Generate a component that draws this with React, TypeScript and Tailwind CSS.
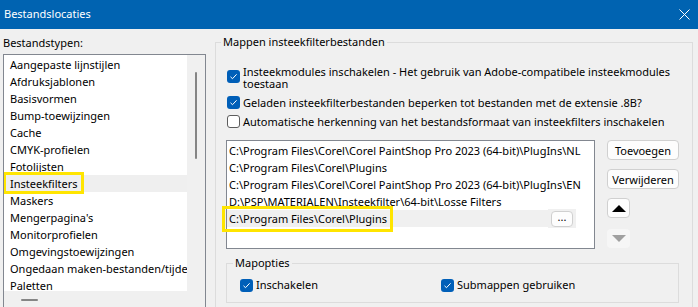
import React from "react";

const fileTypes = [
  "Aangepaste lijnstijlen",
  "Afdruksjablonen",
  "Basisvormen",
  "Bump-toewijzingen",
  "Cache",
  "CMYK-profielen",
  "Fotolijsten",
  "Insteekfilters",
  "Maskers",
  "Mengerpagina's",
  "Monitorprofielen",
  "Omgevingstoewijzingen",
  "Ongedaan maken-bestanden/tijdelijke bestanden",
  "Paletten",
];

const folders = [
  "C:\\Program Files\\Corel\\Corel PaintShop Pro 2023 (64-bit)\\PlugIns\\NL",
  "C:\\Program Files\\Corel\\Plugins",
  "C:\\Program Files\\Corel\\Corel PaintShop Pro 2023 (64-bit)\\PlugIns\\EN",
  "D:\\PSP\\MATERIALEN\\Insteekfilter\\64-bit\\Losse Filters",
];

function CheckBox({ checked }: { checked: boolean }) {
  if (!checked) {
    return (
      <span className="block h-[13px] w-[13px] shrink-0 rounded-[3px] border border-[#5d5d5d] bg-white" />
    );
  }
  return (
    <span className="flex h-[13px] w-[13px] shrink-0 items-center justify-center rounded-[3px] bg-[#005fb8]">
      <svg width="9" height="9" viewBox="0 0 9 9" fill="none">
        <path d="M1.5 4.8 3.5 6.7 7.6 2.3" stroke="white" strokeWidth="1" />
      </svg>
    </span>
  );
}

function Button({ children, className = "" }: { children: React.ReactNode; className?: string }) {
  return (
    <div
      className={`flex items-center justify-center rounded-[4px] border border-[#d0d0d0] bg-[#fdfdfd] leading-none text-black ${className}`}
    >
      {children}
    </div>
  );
}

function FileTypeList() {
  return (
    <div className="flex h-[260px] w-[203px] flex-col border border-[#828790] bg-[#f0f0f0]">
      <div className="flex h-[236px]">
        <div className="w-[183px] overflow-hidden bg-white pt-[1px]">
          {fileTypes.map((t) => (
            <div
              key={t}
              className={`relative h-[17px] whitespace-nowrap pl-[6px] leading-[17px] ${
                t === "Insteekfilters" ? "bg-[#efefef]" : ""
              }`}
            >
              {t}
              {t === "Insteekfilters" && (
                <span className="absolute left-[-1px] top-[-3px] h-[22px] w-[81px] border-[3px] border-[#ffe500]" />
              )}
            </div>
          ))}
        </div>
        <div className="flex w-[17px] justify-center pt-[17px]">
          <div className="h-[87px] w-[2px] rounded-full bg-[#858585]" />
        </div>
      </div>
      <div className="pl-[17px] pt-[8px]">
        <div className="h-[2px] w-[17px] rounded-full bg-[#858585]" />
      </div>
    </div>
  );
}

function FolderList() {
  return (
    <div className="h-[109px] w-[369px] border border-[#828790] bg-white pt-[1px]">
      {folders.map((f) => (
        <div key={f} className="h-[17px] whitespace-nowrap pl-[2px] leading-[17px]">
          {f}
        </div>
      ))}
      <div className="flex h-[17px] items-center">
        <div className="relative h-[17px] w-[321px] bg-[#f0f0f0] pl-[2px] leading-[17px]">
          C:\Program Files\Corel\Plugins
          <span className="absolute left-[-5px] top-[-4px] h-[26px] w-[171px] border-[3px] border-[#ffe500]" />
        </div>
        <div className="flex h-[19px] w-[28px] items-center justify-center bg-[#f0f0f0]">
          <Button className="h-[16px] w-[22px] pb-[4px]">...</Button>
        </div>
      </div>
    </div>
  );
}

export default function App() {
  return (
    <div className="h-[307px] w-[698px] overflow-hidden bg-[#f0f0f0] font-['Segoe_UI','Noto_Sans',sans-serif] text-[11px] text-black">
      <div className="flex h-[29px] items-center justify-between bg-[#0063b1] pl-[4px] pr-[8px] text-white">
        <span>Bestandslocaties</span>
        <svg width="11" height="11" viewBox="0 0 11 11">
          <path d="M0.5 0.5 10.5 10.5 M10.5 0.5 0.5 10.5" stroke="white" strokeWidth="1" />
        </svg>
      </div>

      <div className="flex">
        <div className="pl-[3px] pt-[6px]">
          <div className="h-[16px] leading-[16px]">Bestandstypen:</div>
          <div className="mt-[3px]">
            <FileTypeList />
          </div>
        </div>

        <fieldset className="ml-[9px] mt-[5px] h-[300px] w-[478px] border border-[#dcdcdc] pl-[5px]">
          <legend className="px-[2px] leading-[16px]">Mappen insteekfilterbestanden</legend>
          <div className="ml-[5px] pt-[16px]">
            <div className="flex gap-[3px] pl-[1px]">
              <div className="pt-[4px]">
                <CheckBox checked />
              </div>
              <div className="leading-[12px]">
                Insteekmodules inschakelen - Het gebruik van Adobe-compatibele insteekmodules
                <br />
                toestaan
              </div>
            </div>
            <div className="mt-[6px] flex items-center gap-[3px] pl-[1px] leading-[12px]">
              <CheckBox checked />
              <span>Geladen insteekfilterbestanden beperken tot bestanden met de extensie .8B?</span>
            </div>
            <div className="mt-[6px] flex items-center gap-[3px] pl-[1px] leading-[12px]">
              <CheckBox checked={false} />
              <span>Automatische herkenning van het bestandsformaat van insteekfilters inschakelen</span>
            </div>

            <div className="mt-[12px] flex gap-[12px]">
              <FolderList />
              <div className="flex w-[72px] flex-col">
                <Button className="h-[20px]">Toevoegen</Button>
                <Button className="mt-[9px] h-[20px]">Verwijderen</Button>
                <Button className="mt-[9px] h-[20px] w-[23px]">
                  <svg width="14" height="7" viewBox="0 0 14 7">
                    <path d="M7 0 14 7 0 7Z" fill="black" />
                  </svg>
                </Button>
                <div className="mt-[11px] flex h-[19px] w-[23px] items-center justify-center rounded-[4px] bg-[#f6f6f6]">
                  <svg width="14" height="7" viewBox="0 0 14 7">
                    <path d="M0 0 14 0 7 7Z" fill="#a0a0a0" />
                  </svg>
                </div>
              </div>
            </div>

            <fieldset className="mt-[6px] h-[48px] w-[453px] border border-[#dcdcdc] pl-[6px]">
              <legend className="px-[2px] leading-[16px]">Mapopties</legend>
              <div className="mt-[6px] flex h-[16px] items-center pl-[7px]">
                <div className="flex w-[201px] items-center gap-[3px]">
                  <CheckBox checked />
                  <span>Inschakelen</span>
                </div>
                <div className="flex items-center gap-[3px]">
                  <CheckBox checked />
                  <span>Submappen gebruiken</span>
                </div>
              </div>
            </fieldset>
          </div>
        </fieldset>
      </div>
    </div>
  );
}
